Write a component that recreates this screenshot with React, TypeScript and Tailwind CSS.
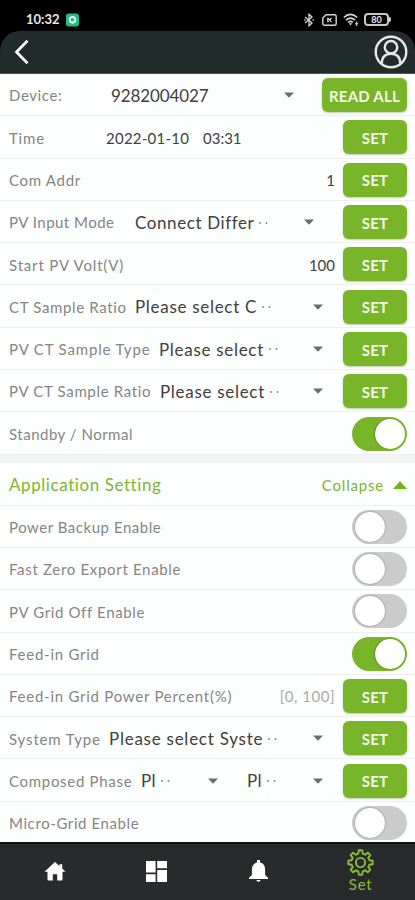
import type { ReactNode } from "react";

function Caret({ className = "" }: { className?: string }) {
  return (
    <svg className={`h-[6px] w-[10px] shrink-0 ${className}`} viewBox="0 0 10 6">
      <path d="M0 .5H10L5 5.7Z" fill="#6c6c6c" />
    </svg>
  );
}

function SetButton({ children = "SET", className = "w-16" }: { children?: ReactNode; className?: string }) {
  return (
    <button
      className={`flex h-[34px] shrink-0 items-center justify-center rounded-[6px] bg-[#78b529] pt-[2px] text-[15px] font-bold tracking-[0.25px] text-[#f4fae8] shadow-[0_1px_2px_rgba(70,110,30,0.35)] ${className}`}
    >
      {children}
    </button>
  );
}

function Toggle({ on = false }: { on?: boolean }) {
  return (
    <div
      className={`ml-auto flex h-[34px] w-[55px] shrink-0 items-center rounded-full ${
        on ? "justify-end bg-[#78b529] pr-[2px]" : "justify-start bg-[#cbcbcb] pl-[3px]"
      }`}
    >
      <div
        className={`h-[30px] w-[30px] rounded-full bg-white ${
          on ? "shadow-[-1px_0_1px_rgba(50,90,20,0.5)]" : "shadow-[0_0_2px_rgba(90,90,90,0.7)]"
        }`}
      />
    </div>
  );
}

function Row({ label, labelClass = "", children }: { label: string; labelClass?: string; children: ReactNode }) {
  return (
    <div className="flex h-[42.3px] shrink-0 items-center border-b border-[#efefef] pt-px pr-2 pl-[9px]">
      <span className={`shrink-0 pt-px text-[15px] text-[#858585] ${labelClass}`}>{label}</span>
      {children}
    </div>
  );
}

function Value({ text, dots = false, className = "" }: { text: string; dots?: boolean; className?: string }) {
  return (
    <span className={`flex shrink-0 items-center pt-px text-[#404040] ${className}`}>
      {text}
      {dots && <Dots />}
    </span>
  );
}

function Dots() {
  return (
    <svg className="ml-[5px] h-[2px] w-[10px]" viewBox="0 0 10 2">
      <circle cx="1" cy="1" r="1" fill="#888" />
      <circle cx="7.5" cy="1" r="1" fill="#888" />
    </svg>
  );
}

function StatusBar() {
  return (
    <div className="flex h-[31px] items-center bg-black pt-[8px] pr-[24px] pl-[26px] text-[#e8e8e8]">
      <span className="text-[13px] font-bold">10:32</span>
      <svg className="ml-[6px] h-[14px] w-[13px]" viewBox="0 0 14 14">
        <rect width="14" height="14" rx="3" fill="#1fbf82" />
        <circle cx="7" cy="6.6" r="3" fill="none" stroke="#effff7" strokeWidth="2" />
        <path d="M5.5 9.5 7 11.3 8.5 9.5Z" fill="#effff7" />
      </svg>
      <svg className="ml-auto h-[14px] w-[10px]" viewBox="0 0 10 14" fill="none" stroke="#d5d5d5" strokeWidth="1.3">
        <path d="M1 4 8 10 5 12.8V1.2L8 4 1 10" />
        <path d="M.3 7H1.6M8.5 7H9.8" />
      </svg>
      <svg className="ml-[8px] h-[12px] w-[15px]" viewBox="0 0 15 12" fill="none" stroke="#d5d5d5" strokeWidth="1.4">
        <path d="M4 .8H12.3Q14.2.8 14.2 2.6V9.4Q14.2 11.2 12.3 11.2H2.7Q.8 11.2.8 9.4V4Z" />
        <path d="M5.7 4 9.5 8M9.5 4 5.7 8M5.7 3.8V8.2" strokeWidth="1.1" />
      </svg>
      <svg className="ml-[6px] h-[14px] w-[16px]" viewBox="0 0 16 14" fill="none" stroke="#d5d5d5" strokeWidth="1.7">
        <path d="M.8 4.5Q7.5-1.7 14.2 4.5M3 7.1Q7.5 3 12 7.1M5.2 9.4Q7.5 7.4 9.8 9.4" />
        <path d="M5.8 10.3H9.2L7.5 12.4Z" fill="#d5d5d5" stroke="none" />
        <path d="M13.7 8.5V13M12 10.7H15.4" strokeWidth="1.1" />
      </svg>
      <div className="ml-[5px] flex h-[13px] w-[25px] items-center justify-center rounded-[4px] border-2 border-[#c8c8c8] text-[9px] leading-none font-bold">
        80
      </div>
      <div className="h-[5px] w-[2px] rounded-r-full bg-[#d5d5d5]" />
    </div>
  );
}

function Header() {
  return (
    <div className="bg-black">
      <div className="flex h-[43px] items-center justify-between rounded-t-[20px] border-b border-[#4f5654] bg-[#222c2a] pr-[7px] pl-[14px]">
        <svg className="h-[26px] w-[16px]" viewBox="0 0 16 26" fill="none" stroke="#fff" strokeWidth="2.7">
          <path d="M13.5 1.8 2.5 13 13.5 24.2" />
        </svg>
        <svg className="h-[34px] w-[34px]" viewBox="0 0 35 35" fill="none" stroke="#e4e8e7" strokeWidth="2.5">
          <circle cx="17.5" cy="17.5" r="15.7" />
          <circle cx="17.5" cy="12.6" r="6.4" />
          <path d="M8 29.5C8 22.7 11.8 19.4 17.5 19.4S27 22.7 27 29.5" />
        </svg>
      </div>
    </div>
  );
}

function NavBar() {
  return (
    <nav className="grid h-[58px] shrink-0 grid-cols-4 border-t-2 border-[#101111] bg-[#292a2b]">
      <div className="flex items-center justify-center pb-[2px] pl-[6px]">
        <svg className="h-[19px] w-[22px]" viewBox="0 0 21 19" fill="#fff">
          <path d="M10.5 0 0 9.7H3V17.3Q3 18.5 4.2 18.5H8.3V12.3H12.7V18.5H16.8Q18 18.5 18 17.3V9.7H21L17.7 6.6V2.2H15V4.1Z" />
        </svg>
      </div>
      <div className="flex items-center justify-center pb-[2px] pl-[2px]">
        <svg className="h-[21px] w-[21px]" viewBox="0 0 21 21" fill="#fff">
          <path d="M0 0H9.6V11.5H0ZM11.2 0H21V7.3H11.2ZM0 13.3H9.6V21H0ZM11.2 9H21V21H11.2Z" />
        </svg>
      </div>
      <div className="flex items-center justify-center pr-[2px] pb-[2px]">
        <svg className="h-[22px] w-[19px]" viewBox="0 0 19 22" fill="#fff">
          <path d="M8 0H11V2.6C14.4 3.3 16.1 6 16.1 9V15L19 17.7V19H0V17.7L2.9 15V9C2.9 6 4.6 3.3 8 2.6ZM7.3 20H11.7Q11.2 21.8 9.5 21.8T7.3 20Z" />
        </svg>
      </div>
      <div className="flex flex-col items-center pt-[5px] pr-[5px]">
        <svg className="h-[27px] w-[27px]" viewBox="0 0 27 27" fill="none" stroke="#86bd3c" strokeWidth="1.9" strokeLinejoin="round">
          <path d="M11.2 4.7 11.8 1.3H15.2L15.8 4.7 18.1 5.7 20.9 3.7 23.3 6.1 21.3 8.9 22.3 11.2 25.7 11.8V15.2L22.3 15.8 21.3 18.1 23.3 20.9 20.9 23.3 18.1 21.3 15.8 22.3 15.2 25.7H11.8L11.2 22.3 8.9 21.3 6.1 23.3 3.7 20.9 5.7 18.1 4.7 15.8 1.3 15.2V11.8L4.7 11.2 5.7 8.9 3.7 6.1 6.1 3.7 8.9 5.7Z" />
          <circle cx="13.5" cy="13.5" r="4.6" />
        </svg>
        <span className="text-[15px] leading-[17px] tracking-[0.8px] text-[#86bd3c]">Set</span>
      </div>
    </nav>
  );
}

export default function App() {
  return (
    <div className="flex h-[900px] w-[415px] flex-col overflow-hidden bg-[#fdfefe] font-['Lato','Noto_Sans',sans-serif] whitespace-pre">
      <StatusBar />
      <Header />
      <main className="flex h-[768px] flex-col overflow-hidden">
        <Row label="Device:" labelClass="w-[102px] tracking-[0.6px]">
          <Value text="9282004027" className="text-[17px] tracking-[-0.1px]" />
          <Caret className="mr-[28px] ml-auto" />
          <SetButton className="w-[85px]">READ ALL</SetButton>
        </Row>
        <Row label="Time" labelClass="w-[97px] tracking-[0.8px]">
          <Value text="2022-01-10" className="w-[97px] text-[15px] tracking-[0.25px]" />
          <Value text="03:31" className="mr-auto text-[15px]" />
          <SetButton />
        </Row>
        <Row label="Com Addr" labelClass="tracking-[0.7px]">
          <Value text="1" className="mr-2 ml-auto text-[15px]" />
          <SetButton />
        </Row>
        <Row label="PV Input Mode" labelClass="w-[126px] tracking-[0.47px]">
          <Value text="Connect Differ" dots className="text-[17px] tracking-[0.6px]" />
          <Caret className="mr-[29px] ml-auto" />
          <SetButton />
        </Row>
        <Row label="Start PV Volt(V)" labelClass="tracking-[0.83px]">
          <Value text="100" className="mr-2 ml-auto text-[15px]" />
          <SetButton />
        </Row>
        <Row label="CT Sample Ratio" labelClass="w-[126px] tracking-[0.65px]">
          <Value text="Please select C" dots className="text-[17px] tracking-[0.7px]" />
          <Caret className="mr-[20px] ml-auto" />
          <SetButton />
        </Row>
        <Row label="PV CT Sample Type" labelClass="w-[150px] tracking-[0.83px]">
          <Value text="Please select" dots className="text-[17px] tracking-[0.7px]" />
          <Caret className="mr-[20px] ml-auto" />
          <SetButton />
        </Row>
        <Row label="PV CT Sample Ratio" labelClass="w-[151px] tracking-[0.66px]">
          <Value text="Please select" dots className="text-[17px] tracking-[0.7px]" />
          <Caret className="mr-[20px] ml-auto" />
          <SetButton />
        </Row>
        <Row label="Standby / Normal" labelClass="tracking-[0.5px]">
          <Toggle on />
        </Row>
        <div className="h-[8px] shrink-0 bg-[#f2f4f4]" />
        <div className="flex h-[43px] shrink-0 items-center border-b border-[#efefef] pt-[3px] pr-2 pl-[9px] text-[#7fb52e]">
          <span className="text-[17px] tracking-[0.58px]">Application Setting</span>
          <span className="mr-[9px] ml-auto text-[15px] tracking-[0.8px]">Collapse</span>
          <svg className="h-[8px] w-[14px]" viewBox="0 0 14 8">
            <path d="M0 8 7 0 14 8Z" fill="#70b51e" />
          </svg>
        </div>
        <Row label="Power Backup Enable" labelClass="tracking-[0.53px]">
          <Toggle />
        </Row>
        <Row label="Fast Zero Export Enable" labelClass="tracking-[0.68px]">
          <Toggle />
        </Row>
        <Row label="PV Grid Off Enable" labelClass="tracking-[0.63px]">
          <Toggle />
        </Row>
        <Row label="Feed-in Grid" labelClass="tracking-[0.75px]">
          <Toggle on />
        </Row>
        <Row label="Feed-in Grid Power Percent(%)" labelClass="tracking-[0.75px]">
          <span className="mr-2 ml-auto pt-px text-[15px] tracking-[0.5px] text-[#aaa]">[0, 100]</span>
          <SetButton />
        </Row>
        <Row label="System Type" labelClass="w-[100px] tracking-[0.85px]">
          <Value text="Please select Syste" dots className="text-[17px] tracking-[0.75px]" />
          <Caret className="mr-[20px] ml-auto" />
          <SetButton />
        </Row>
        <Row label="Composed Phase" labelClass="w-[132px] tracking-[0.7px]">
          <Value text="Pl" dots className="w-[67px] text-[17px] tracking-[0.4px]" />
          <Caret className="mr-[29px]" />
          <Value text="Pl" dots className="text-[17px] tracking-[0.4px]" />
          <Caret className="mr-[20px] ml-auto" />
          <SetButton />
        </Row>
        <Row label="Micro-Grid Enable" labelClass="tracking-[0.6px]">
          <Toggle />
        </Row>
      </main>
      <NavBar />
    </div>
  );
}
